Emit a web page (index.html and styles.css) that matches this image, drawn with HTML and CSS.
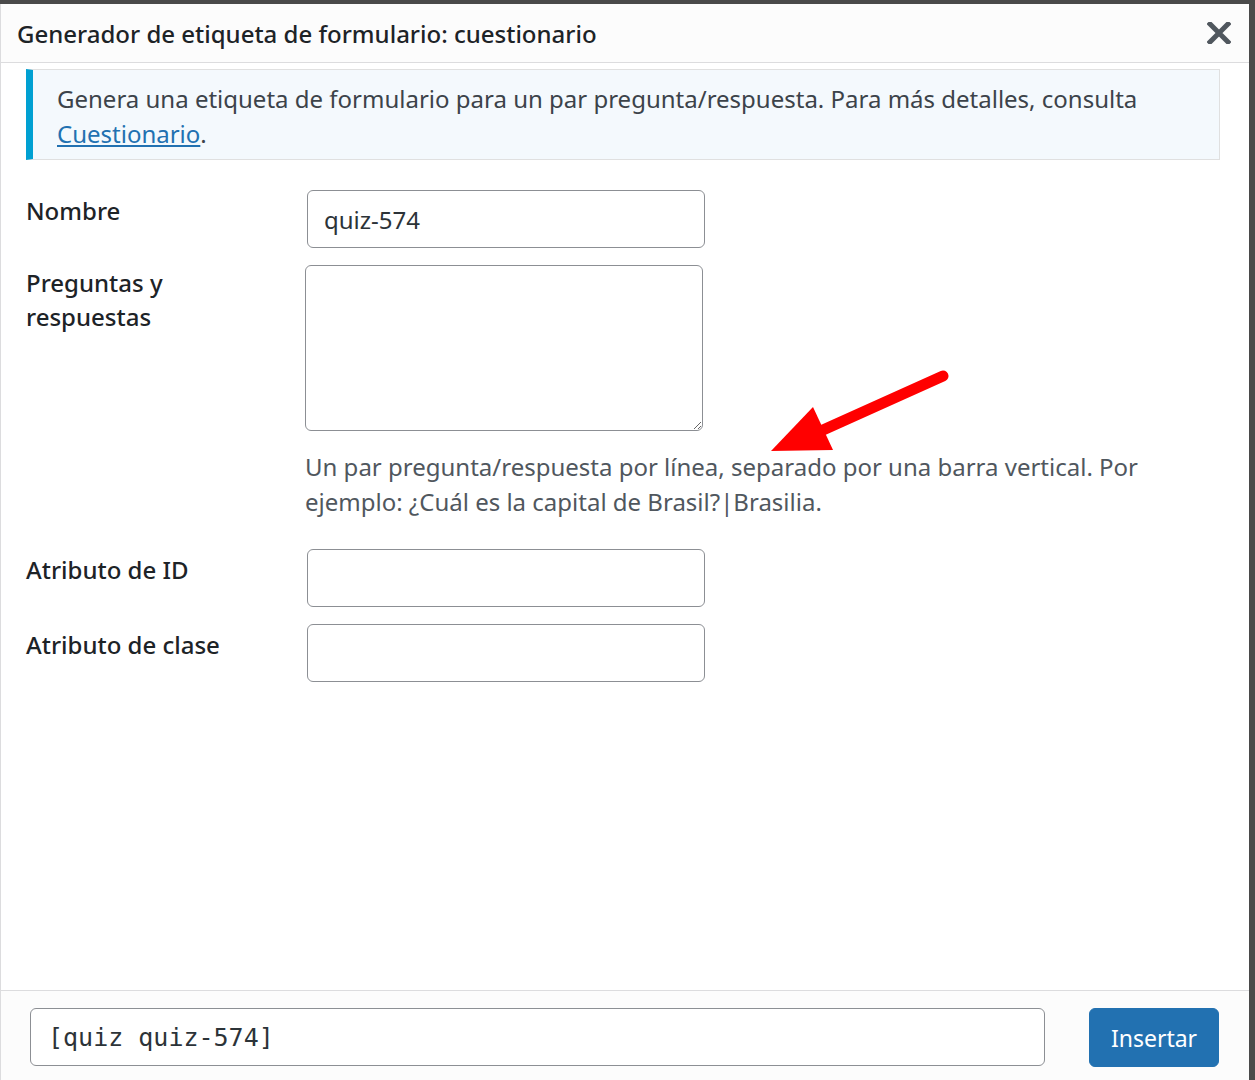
FILE: index.html
```html
<!DOCTYPE html>
<html>
<head>
	<title>Generador de etiqueta de formulario: cuestionario</title>
	<meta name="viewport" content="width=device-width, initial-scale=1" />
	<link rel="stylesheet" href="styles.css">
</head>
<body>
	<div class="modal">
		<div class="modal-header">
			<h1 class="modal-title">Generador de etiqueta de formulario: cuestionario</h1>
			<button class="modal-close" aria-label="Cerrar">
				<svg width="24" height="22" viewBox="0 0 24 22">
					<path d="M3 2 L21 20 M21 2 L3 20" stroke="#50575e" stroke-width="5" stroke-linecap="square" />
				</svg>
			</button>
		</div>

		<div class="modal-content">
			<div class="notice">
				Genera una etiqueta de formulario para un par pregunta/respuesta. Para más detalles, consulta
				<a href="#">Cuestionario</a>.
			</div>

			<div class="form-grid">
				<label class="form-label">Nombre</label>
				<div class="form-field">
					<input type="text" class="text-input" value="quiz-574" />
				</div>

				<label class="form-label form-label-tight">Preguntas y<br>respuestas</label>
				<div class="form-field">
					<textarea class="text-area"></textarea>
					<p class="description">Un par pregunta/respuesta por línea, separado por una barra vertical. Por ejemplo: ¿Cuál es la capital de Brasil?|Brasilia.</p>
				</div>

				<label class="form-label">Atributo de ID</label>
				<div class="form-field">
					<input type="text" class="text-input" value="" />
				</div>

				<label class="form-label">Atributo de clase</label>
				<div class="form-field">
					<input type="text" class="text-input" value="" />
				</div>
			</div>
		</div>

		<div class="modal-footer">
			<input type="text" class="tag-input" value="[quiz quiz-574]" readonly />
			<button class="button-primary">Insertar</button>
		</div>

		<!-- annotation arrow drawn over the screenshot -->
		<svg class="arrow" width="200" height="100" viewBox="0 0 200 100">
			<line x1="175" y1="18" x2="55" y2="72" stroke="#ff0000" stroke-width="11" stroke-linecap="round" />
			<polygon points="3,93 45,49 65,92" fill="#ff0000" />
		</svg>
	</div>
</body>
</html>
```

FILE: styles.css
```css
body {
	margin: 0;
	background-color: #4a4a4a;
	font-family: "Noto Sans", "Open Sans", sans-serif;
	color: #3c434a;
}

.modal {
	position: relative;
	box-sizing: border-box;
	width: 1249px;
	height: 1076px;
	margin-top: 4px;
	background-color: #ffffff;
	border-left: 1px solid #dcdcde;
	display: flex;
	flex-direction: column;
}

.modal-header {
	box-sizing: border-box;
	height: 59px;
	flex: none;
	display: flex;
	align-items: center;
	justify-content: space-between;
	padding: 0 18px 0 16px;
	background-color: #fcfcfc;
	border-bottom: 1px solid #dcdcde;
}

.modal-title {
	margin: 0;
	font-size: 24px;
	font-weight: 500;
	color: #1d2327;
}

.modal-close {
	border: none;
	background: none;
	padding: 0;
	display: flex;
}

.modal-content {
	flex: 1;
	padding: 6px 29px 0 25px;
}

.notice {
	box-sizing: border-box;
	min-height: 91px;
	padding: 11px 20px 8px 24px;
	background-color: #f4f9fd;
	border: 1px solid #e0e0e0;
	border-left: 7px solid #00a0d2;
	font-size: 24px;
	line-height: 35px;
}

.notice a {
	color: #2271b1;
}

.form-grid {
	display: grid;
	grid-template-columns: 281px 398px;
	row-gap: 17px;
	margin-top: 30px;
}

.form-label {
	padding-top: 4px;
	font-size: 24px;
	line-height: 34px;
	font-weight: 500;
	color: #1d2327;
}

.form-label-tight {
	padding-top: 1px;
}

.form-field {
	display: flex;
	flex-direction: column;
}

.text-input {
	box-sizing: border-box;
	width: 398px;
	height: 58px;
	padding: 0 16px;
	border: 1px solid #8c8f94;
	border-radius: 6px;
	font-family: inherit;
	font-size: 24px;
	color: #2c3338;
}

.text-area {
	box-sizing: border-box;
	width: 398px;
	height: 166px;
	margin-left: -2px;
	border: 1px solid #8c8f94;
	border-radius: 6px;
}

.description {
	width: 870px;
	margin: 18px 0 13px -2px;
	font-size: 24px;
	line-height: 35px;
	color: #50575e;
}

.modal-footer {
	box-sizing: border-box;
	flex: none;
	height: 90px;
	display: flex;
	align-items: flex-start;
	gap: 44px;
	padding: 17px 30px 0 29px;
	background-color: #fcfcfc;
	border-top: 1px solid #dcdcde;
}

.tag-input {
	box-sizing: border-box;
	width: 1015px;
	height: 58px;
	padding: 0 17px;
	border: 1px solid #8c8f94;
	border-radius: 6px;
	font-family: "DejaVu Sans Mono", monospace;
	font-size: 25px;
	color: #2c3338;
	background-color: #ffffff;
}

.button-primary {
	width: 130px;
	height: 59px;
	border: 1px solid #2271b1;
	border-radius: 6px;
	background-color: #2271b1;
	color: #ffffff;
	font-family: inherit;
	font-size: 23px;
}

.arrow {
	position: absolute;
	left: 767px;
	top: 354px;
}
```
